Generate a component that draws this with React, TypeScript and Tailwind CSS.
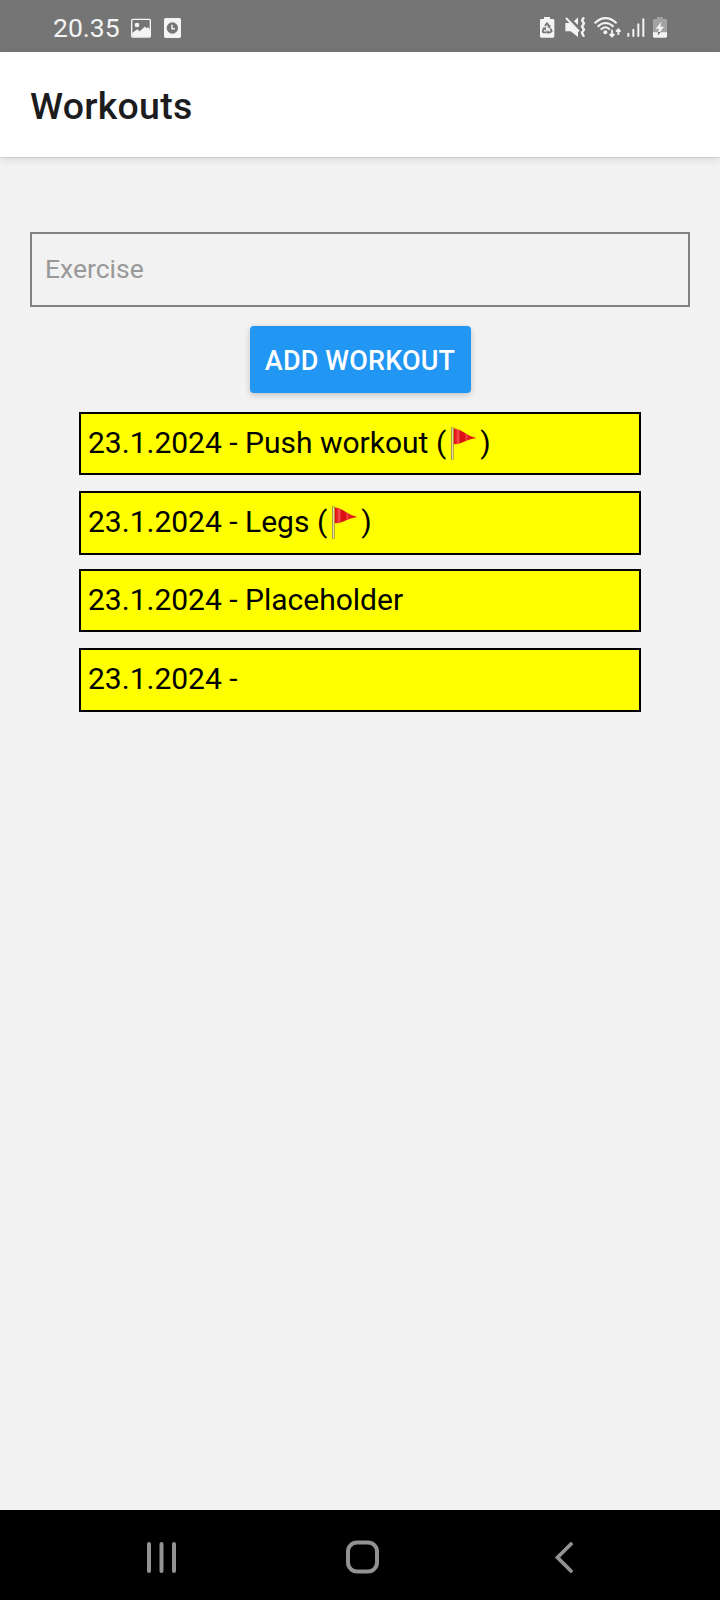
import type { ReactNode } from "react";

type Workout = { date: string; name: string; flagged: boolean; box: string };

const workouts: Workout[] = [
  { date: "23.1.2024", name: "Push workout", flagged: true, box: "h-[63px] mb-4" },
  { date: "23.1.2024", name: "Legs", flagged: true, box: "h-16 mb-3.5" },
  { date: "23.1.2024", name: "Placeholder", flagged: false, box: "h-[63px] mb-4" },
  { date: "23.1.2024", name: "", flagged: false, box: "h-16" },
];

function PictureIcon() {
  return (
    <svg className="ml-3 h-5 w-5" viewBox="0 0 60 60" fill="none">
      <rect x="2" y="4" width="56" height="53" rx="3" stroke="#f4f4f4" strokeWidth="4" />
      <circle cx="18" cy="21" r="7" fill="#f4f4f4" />
      <path d="M4 44 19 34l7 6 15-14 6 4 4-2 7 8v20H4z" fill="#f4f4f4" />
    </svg>
  );
}

function ClockCardIcon() {
  return (
    <svg className="ml-[13px] h-5 w-[17px]" viewBox="0 0 51 60" fill="none">
      <rect width="51" height="60" rx="5" fill="#f4f4f4" />
      <circle cx="25" cy="30" r="17" fill="#757575" />
      <path d="M24 20v12h9" stroke="#f4f4f4" strokeWidth="4.5" />
    </svg>
  );
}

function BatteryRecycleIcon() {
  return (
    <svg className="h-[21px] w-[15px]" viewBox="0 0 45 63" fill="none">
      <path d="M12 0h18v6h9q4 0 4 4v48q0 4-4 4H4q-4 0-4-4V10q0-4 4-4h8z" fill="#f4f4f4" />
      <path d="m15 27 6-8 7 9M31 34l4 8-4 4h-7M18 46h-8l-2-4 5-9" stroke="#757575" strokeWidth="5.5" />
      <path d="m32 24-2 10-10-4zM25 39v13l-8-6zM6 33l11-3 2 11z" fill="#757575" />
    </svg>
  );
}

function MuteVibrateIcon() {
  return (
    <svg className="ml-2.5 h-[21px] w-[21px]" viewBox="0 0 63 63" fill="none">
      <path d="M1 18h13l25 25v17L17 43H1zM39 1v23L27 13z" fill="#f4f4f4" />
      <path d="m3 3 39 40" stroke="#f4f4f4" strokeWidth="6" />
      <path d="m57 1-6 9 6 9-6 10 6 9-6 9 6 12" stroke="#f4f4f4" strokeWidth="7" strokeLinejoin="round" />
    </svg>
  );
}

function WifiIcon() {
  return (
    <svg className="ml-2 h-[21px] w-[27px]" viewBox="0 0 81 63" fill="none" stroke="#f4f4f4" strokeWidth="6">
      <path d="M2 19Q34-12 68 19M11 29Q34 7 59 29M20 38Q34 24 48 38" />
      <circle cx="34" cy="46" r="6" fill="#f4f4f4" stroke="none" />
      <path d="M54 38v20m-7-7 7 7 7-7M73 54V36m-7 8 7-7 7 7" strokeWidth="5.5" />
    </svg>
  );
}

function SignalIcon() {
  return (
    <svg className="ml-1.5 h-[21px] w-[18px]" viewBox="0 0 54 63" fill="none" stroke="#f4f4f4" strokeWidth="6" strokeLinecap="round">
      <path d="M4 50v7M19 38v19M34 22v35M49 7v50" />
    </svg>
  );
}

function BatteryChargingIcon() {
  return (
    <svg className="ml-2 h-[21px] w-3.5" viewBox="0 0 42 63" fill="none">
      <path d="M12 0h18v6h8q4 0 4 4v37H0V10q0-4 4-4h8z" fill="#a3a3a3" />
      <path d="M0 46h42v12q0 4-4 4H4q-4 0-4-4z" fill="#f4f4f4" />
      <path d="M25 14 8 35h10l-4 18 19-24H22z" fill="#f4f4f4" />
      <path d="m16 46-2 9 8-9z" fill="#303030" />
    </svg>
  );
}

function StatusBar() {
  return (
    <div className="flex h-[52px] items-center bg-[#757575] pt-[3px] pr-[53px] pl-[53px] text-[#f4f4f4]">
      <span className="w-[66px] pt-px text-[26.5px] leading-none whitespace-nowrap">20.35</span>
      <PictureIcon />
      <ClockCardIcon />
      <div className="ml-auto flex items-center">
        <BatteryRecycleIcon />
        <MuteVibrateIcon />
        <WifiIcon />
        <SignalIcon />
        <BatteryChargingIcon />
      </div>
    </div>
  );
}

function Flag({ id }: { id: string }) {
  return (
    <svg className="-ml-px inline-block h-[33px] w-[35px] align-[-7px]" viewBox="0 0 105 99">
      <defs>
        <linearGradient id={id} x1="0" x2="1" y1="0" y2="0">
          <stop offset="0" stopColor="#d90d0d" />
          <stop offset="0.12" stopColor="#f02525" />
          <stop offset="0.2" stopColor="#f45252" />
          <stop offset="0.3" stopColor="#d80f14" />
          <stop offset="0.48" stopColor="#dd1015" />
          <stop offset="0.55" stopColor="#f24040" />
          <stop offset="0.68" stopColor="#e01818" />
          <stop offset="1" stopColor="#d62a0a" />
        </linearGradient>
      </defs>
      <path d="M26 4q20 3 34 14 14 10 34 15-18 2-33 10-16 9-35 9z" fill={`url(#${id})`} />
      <rect x="18" y="1" width="8" height="97" fill="#9c8c40" />
      <rect x="20.5" y="3" width="3.5" height="93" fill="#e6dea0" />
    </svg>
  );
}

function WorkoutRow({ workout, children }: { workout: Workout; children?: ReactNode }) {
  return (
    <li className={`border-2 border-black bg-[#ffff00] pt-[11px] pl-[7px] text-[30px] leading-9 whitespace-pre text-black ${workout.box}`}>
      {workout.date} - {workout.name}
      {children}
    </li>
  );
}

export default function App() {
  return (
    <div className="flex h-[1600px] w-[720px] flex-col overflow-hidden bg-[#f2f2f2] font-[Roboto,sans-serif]">
      <StatusBar />
      <header className="flex h-[105px] items-center bg-white pl-[30px] shadow-[0_1px_1px_rgba(0,0,0,0.09),0_3px_8px_rgba(0,0,0,0.09)]">
        <h1 className="pt-1 text-[37.5px] leading-none font-medium tracking-[0.25px] text-[#1c1c1e]">Workouts</h1>
      </header>
      <main className="flex flex-1 flex-col items-center pt-[75px]">
        <input
          className="h-[75px] w-[660px] border-2 border-[#808080] bg-transparent pb-0.5 pl-[13px] text-[26.5px] outline-none placeholder:text-[#999999]"
          placeholder="Exercise"
        />
        <button className="mt-[19px] h-[67px] w-[221px] rounded-[4px] bg-[#2196f3] pt-[3px] text-[27px] leading-none font-medium tracking-[0.15px] whitespace-nowrap text-white shadow-[0_2px_6px_rgba(0,0,0,0.2)]">
          ADD WORKOUT
        </button>
        <ul className="mt-[19px] w-[562px]">
          {workouts.map((workout, index) => (
            <WorkoutRow key={index} workout={workout}>
              {workout.flagged && (
                <>
                  {" ("}
                  <Flag id={`flag-${index}`} />)
                </>
              )}
            </WorkoutRow>
          ))}
        </ul>
      </main>
      <nav className="flex h-[90px] items-center bg-black pt-[3px] pl-[146px]">
        <svg className="h-8 w-[31px]" viewBox="0 0 31 32" stroke="#929292" strokeWidth="4" strokeLinecap="round">
          <path d="M3 3v27M15.5 3v27M28 3v27" />
        </svg>
        <svg className="ml-[168px] h-[34px] w-[35px]" viewBox="0 0 35 34" fill="none" stroke="#929292" strokeWidth="4">
          <rect x="3" y="2.5" width="29" height="29" rx="9" />
        </svg>
        <svg className="ml-[174px] h-8 w-5" viewBox="0 0 20 32" fill="none" stroke="#929292" strokeWidth="3.8" strokeLinecap="round">
          <path d="M17 3 3.5 16.5 17 30" />
        </svg>
      </nav>
    </div>
  );
}
